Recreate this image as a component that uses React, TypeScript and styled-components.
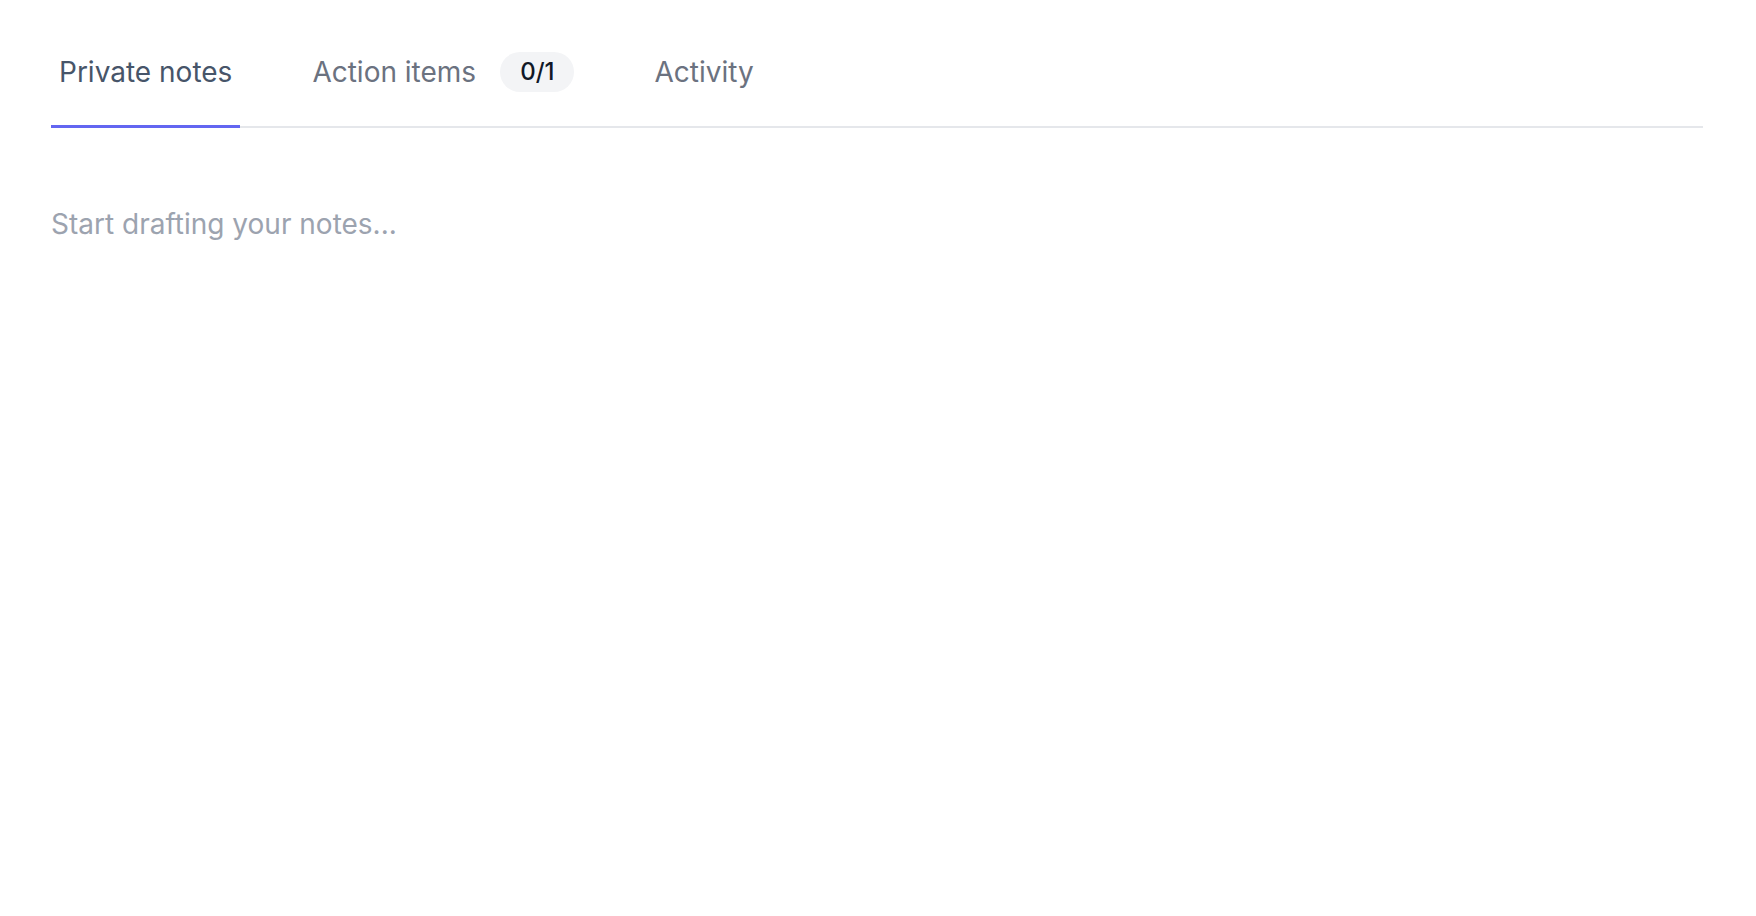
import React from 'react'
import styled, { createGlobalStyle } from 'styled-components'

const GlobalStyle = createGlobalStyle`
  html, body {
    margin: 0;
    padding: 0;
    background: #ffffff;
  }

  body {
    font-family: Inter, "Noto Sans", "Liberation Sans", sans-serif;
    -webkit-font-smoothing: antialiased;
  }
`

const Page = styled.div`
  padding: 52px 53px 0 51px;
  min-height: 916px;
  box-sizing: border-box;
`

const TabBar = styled.nav`
  display: flex;
  gap: 64px;
  box-shadow: inset 0 -2px 0 #e5e7eb;
`

const Tab = styled.button<{ $active?: boolean }>`
  display: flex;
  align-items: center;
  gap: 24px;
  height: 76px;
  padding: 0 8px 33px;
  box-sizing: border-box;
  border: 0;
  border-bottom: 3px solid ${({ $active }) => ($active ? '#6366f1' : 'transparent')};
  background: none;
  font-family: inherit;
  font-size: 28px;
  line-height: 40px;
  font-weight: 400;
  color: ${({ $active }) => ($active ? '#475569' : '#6b7280')};
  cursor: pointer;
`

const Count = styled.span`
  display: inline-flex;
  align-items: center;
  justify-content: center;
  height: 40px;
  padding: 0 20px;
  border-radius: 999px;
  background: #f3f4f6;
  color: #111827;
  font-size: 24px;
  font-weight: 500;
`

const Editor = styled.div`
  margin-top: 76px;
  font-size: 28px;
  line-height: 40px;
  color: #9ca3af;
  outline: none;
`

const tabs = [
  { id: 'notes', label: 'Private notes' },
  { id: 'actions', label: 'Action items', count: '0/1' },
  { id: 'activity', label: 'Activity' },
]

export default function App() {
  const [current, setCurrent] = React.useState('notes')

  return (
    <>
      <GlobalStyle />
      <Page>
        <TabBar>
          {tabs.map((tab) => (
            <Tab key={tab.id} $active={tab.id === current} onClick={() => setCurrent(tab.id)}>
              {tab.label}
              {tab.count && <Count>{tab.count}</Count>}
            </Tab>
          ))}
        </TabBar>
        <Editor>Start drafting your notes...</Editor>
      </Page>
    </>
  )
}
